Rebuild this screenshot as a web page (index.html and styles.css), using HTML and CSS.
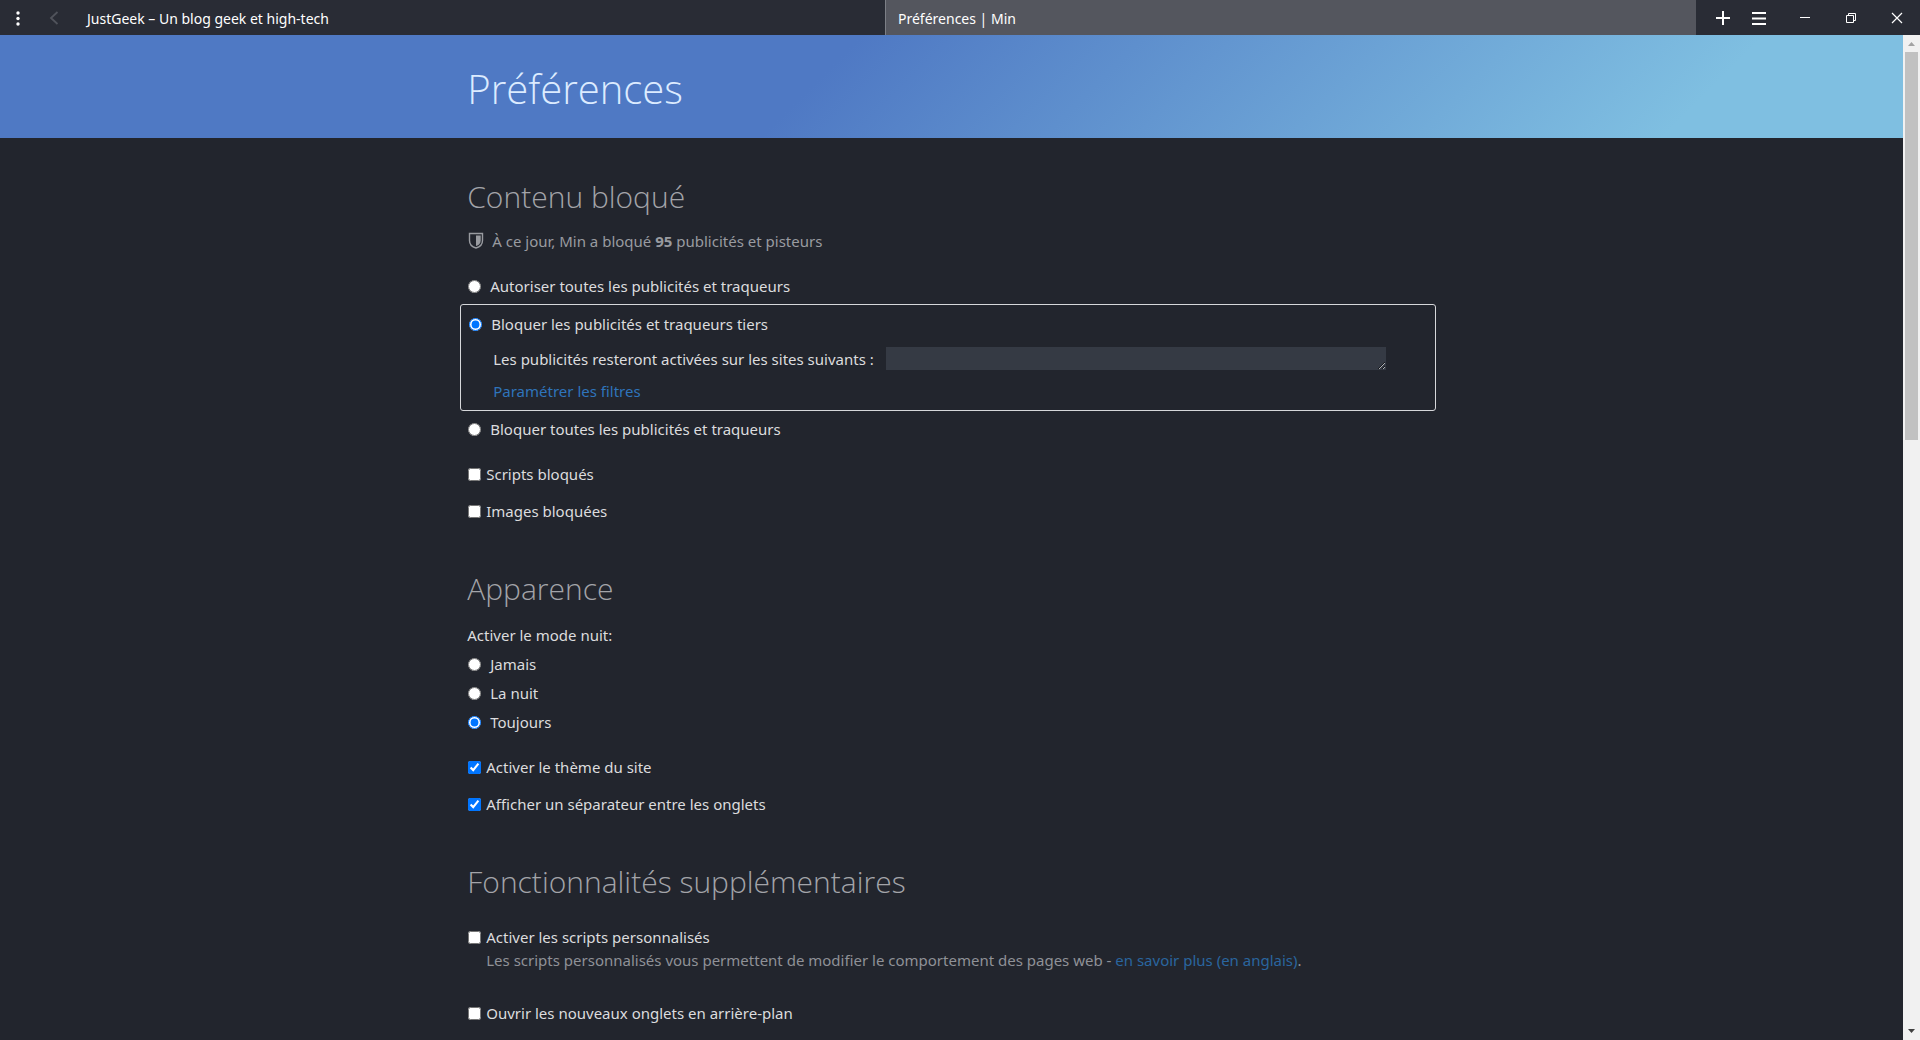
FILE: index.html
```html
<!DOCTYPE html>
<html lang="fr">
<head>
<meta charset="utf-8">
<title>Préférences | Min</title>
<link rel="stylesheet" href="styles.css">
</head>
<body>
<div class="window">
  <nav class="toolbar" aria-label="Onglets">
    <div class="toolbar-start">
      <button class="tool" type="button" aria-label="Menu">
        <svg width="16" height="16" viewBox="0 0 16 16" fill="#fff"><circle cx="8" cy="3" r="1.7"/><circle cx="8" cy="8.500" r="1.700"/><circle cx="8" cy="14" r="1.700"/></svg>
      </button>
      <button class="tool tool-disabled" type="button" aria-label="Page précédente" disabled>
        <svg width="16" height="16" viewBox="0 0 16 16" fill="none" stroke="#50535b" stroke-width="1.800"><path d="M11.500 2 5 8l6.500 6"/></svg>
      </button>
    </div>
    <div class="tabs">
      <button class="tab" type="button">JustGeek – Un blog geek et high-tech</button>
      <button class="tab tab-active" type="button">Préférences | Min</button>
    </div>
    <div class="toolbar-end">
      <button class="tool" type="button" aria-label="Nouvel onglet">
        <svg width="16" height="16" viewBox="0 0 16 16" stroke="#fff" stroke-width="2"><path d="M8 1v14M1 8h14"/></svg>
      </button>
      <button class="tool" type="button" aria-label="Tâches">
        <svg width="16" height="16" viewBox="0 0 16 16" stroke="#fff" stroke-width="2"><path d="M1 3h14M1 8.500h14M1 14h14"/></svg>
      </button>
    </div>
    <div class="window-controls">
      <button class="control" type="button" aria-label="Réduire">
        <svg width="12" height="12" viewBox="0 0 12 12" stroke="#fff"><path d="M1 5.500h10"/></svg>
      </button>
      <button class="control" type="button" aria-label="Restaurer">
        <svg width="12" height="12" viewBox="0 0 12 12" fill="none" stroke="#fff"><path d="M1.500 3.500h7v7h-7zM3.500 3.500v-2h7v7h-2"/></svg>
      </button>
      <button class="control" type="button" aria-label="Fermer">
        <svg width="12" height="12" viewBox="0 0 12 12" stroke="#fff" stroke-width="1.200"><path d="m1 1 10 10M11 1 1 11"/></svg>
      </button>
    </div>
  </nav>

  <div class="viewport">
    <div class="page">
      <header class="banner"><h1 class="column">Préférences</h1></header>
      <main class="column">
        <section>
          <h2>Contenu bloqué</h2>
          <p class="stats">
            <svg width="16" height="18" viewBox="0 0 16 18"><path d="M1.500 1.500h13v7c0 4-2.500 6.500-6.500 7.500-4-1-6.500-3.500-6.500-7.500z" fill="none" stroke="#999ba0" stroke-width="1.400"/><path d="M8 3.500h4.700v5c0 3-1.700 4.700-4.700 5.500z" fill="#999ba0"/></svg>
            <span>À ce jour, Min a bloqué <strong>95</strong> publicités et pisteurs</span>
          </p>
          <div class="levels">
            <label class="option radio"><input type="radio" name="blocking">Autoriser toutes les publicités et traqueurs</label>
            <div class="selected-level">
              <label class="option radio"><input type="radio" name="blocking" checked>Bloquer les publicités et traqueurs tiers</label>
              <div class="exceptions">
                <label for="sites">Les publicités resteront activées sur les sites suivants :</label>
                <textarea id="sites" rows="1"></textarea>
              </div>
              <a class="filters" href="#filtres">Paramétrer les filtres</a>
            </div>
            <label class="option radio"><input type="radio" name="blocking">Bloquer toutes les publicités et traqueurs</label>
          </div>
          <div class="checks">
            <label class="option"><input type="checkbox">Scripts bloqués</label>
            <label class="option"><input type="checkbox">Images bloquées</label>
          </div>
        </section>

        <section>
          <h2>Apparence</h2>
          <div class="night">
            <span>Activer le mode nuit:</span>
            <label class="option radio"><input type="radio" name="night">Jamais</label>
            <label class="option radio"><input type="radio" name="night">La nuit</label>
            <label class="option radio"><input type="radio" name="night" checked>Toujours</label>
          </div>
          <div class="checks">
            <label class="option"><input type="checkbox" checked>Activer le thème du site</label>
            <label class="option"><input type="checkbox" checked>Afficher un séparateur entre les onglets</label>
          </div>
        </section>

        <section>
          <h2>Fonctionnalités supplémentaires</h2>
          <div class="checks features">
            <div>
              <label class="option"><input type="checkbox">Activer les scripts personnalisés</label>
              <p class="note">Les scripts personnalisés vous permettent de modifier le comportement des pages web - <a href="#scripts">en savoir plus (en anglais)</a>.</p>
            </div>
            <label class="option"><input type="checkbox">Ouvrir les nouveaux onglets en arrière-plan</label>
          </div>
        </section>
      </main>
    </div>
    <div class="scrollbar" aria-hidden="true">
      <svg class="arrow" width="17" height="17" viewBox="0 0 17 17"><path d="M5 11h7L8.500 7z" fill="#a3a3a3"/></svg>
      <div class="track"><div class="thumb"></div></div>
      <svg class="arrow" width="17" height="17" viewBox="0 0 17 17"><path d="M5 6h7l-3.500 4z" fill="#404040"/></svg>
    </div>
  </div>
</div>
</body>
</html>
```

FILE: styles.css
```css
* {
  box-sizing: border-box;
}

body {
  margin: 0;
  background: #22252d;
  color: #dcdcde;
  font: 15px/24px "Noto Sans", "Open Sans", sans-serif;
}

h1,
h2,
p {
  margin: 0;
}

button {
  border: 0;
  padding: 0;
  background: none;
  color: inherit;
  font: inherit;
}

svg {
  display: block;
  flex: none;
}

a {
  color: #2f74bb;
  text-decoration: none;
}

.window {
  display: flex;
  flex-direction: column;
  height: 100vh;
  overflow: hidden;
}

/* Tab bar */

.toolbar {
  display: flex;
  flex: none;
  height: 35px;
  background: #292c35;
  color: #fff;
  font-size: 14px;
}

.toolbar-start,
.toolbar-end,
.window-controls {
  display: flex;
}

.toolbar-start {
  padding-right: 2px;
}

.toolbar-end {
  padding: 0 5px 0 9px;
}

.tool,
.control {
  display: flex;
  align-items: center;
  justify-content: center;
  width: 36px;
}

.control {
  width: 46px;
}

.tabs {
  display: flex;
  flex: 1;
  min-width: 0;
}

.tab {
  flex: 1 1 0;
  min-width: 0;
  padding: 2px 12px 0;
  border-left: 1px solid transparent;
  overflow: hidden;
  text-align: left;
  text-overflow: ellipsis;
  white-space: nowrap;
}

.tab-active {
  border-left-color: #7c7f86;
  background: #54565e;
}

/* Page */

.viewport {
  display: flex;
  flex: 1;
  min-height: 0;
}

.page {
  flex: 1;
  min-width: 0;
  overflow: hidden;
}

.column {
  width: 51%;
  min-width: 720px;
  margin: 0 auto;
  padding-inline: 1px;
}

.banner {
  padding: 24px 0 19px;
  background: linear-gradient(135deg, #4f79c4 43%, #7fbfe1 88%);
}

h1 {
  color: #dcebff;
  font: 300 40px/60px "Open Sans", "Noto Sans", sans-serif;
}

main {
  padding-block: 37px 40px;
}

section + section {
  margin-top: 44px;
}

h2 {
  color: #a3a4a9;
  font: 300 30px/44px "Open Sans", "Noto Sans", sans-serif;
}

.stats {
  display: flex;
  align-items: center;
  gap: 8px;
  margin: 10px 0 21px;
  padding-left: 1px;
  color: #999ba0;
}

.option {
  display: flex;
  align-items: center;
  width: fit-content;
  gap: 5px;
}

.option input {
  width: 13px;
  height: 13px;
  margin: 0;
}

.radio {
  gap: 9px;
}

.levels {
  display: flex;
  flex-direction: column;
  gap: 6px;
}

.selected-level {
  margin-left: -7px;
  padding: 7px;
  border: 1px solid #d6d7da;
  border-radius: 3px;
}

.exceptions {
  display: flex;
  align-items: flex-start;
  gap: 12px;
  margin: 11px 0 8px;
  padding-left: 25px;
}

.exceptions textarea {
  width: 500px;
  height: 23px;
  margin: 0 42px 0 0;
  padding: 0;
  border: 0;
  background: #353a44;
  color: inherit;
  font: inherit;
}

.exceptions label {
  flex: none;
}

.filters {
  display: block;
  width: fit-content;
  margin-left: 25px;
}

.checks {
  display: flex;
  flex-direction: column;
  gap: 13px;
  margin-top: 21px;
}

.option,
.checks {
  padding-left: 1px;
}

.checks .option {
  padding-left: 0;
}

.night {
  display: flex;
  flex-direction: column;
  gap: 5px;
  margin-top: 12px;
}

.features {
  gap: 30px;
}

.note {
  padding-left: 18px;
  color: #8f9197;
  line-height: 22px;
}

.note a {
  color: #2a659f;
}

/* Scroll bar */

.scrollbar {
  display: flex;
  flex: none;
  flex-direction: column;
  width: 17px;
  background: #f1f1f1;
}

.track {
  flex: 1;
  padding: 0 2px;
}

.thumb {
  height: 40%;
  background: #c1c1c1;
}
```
